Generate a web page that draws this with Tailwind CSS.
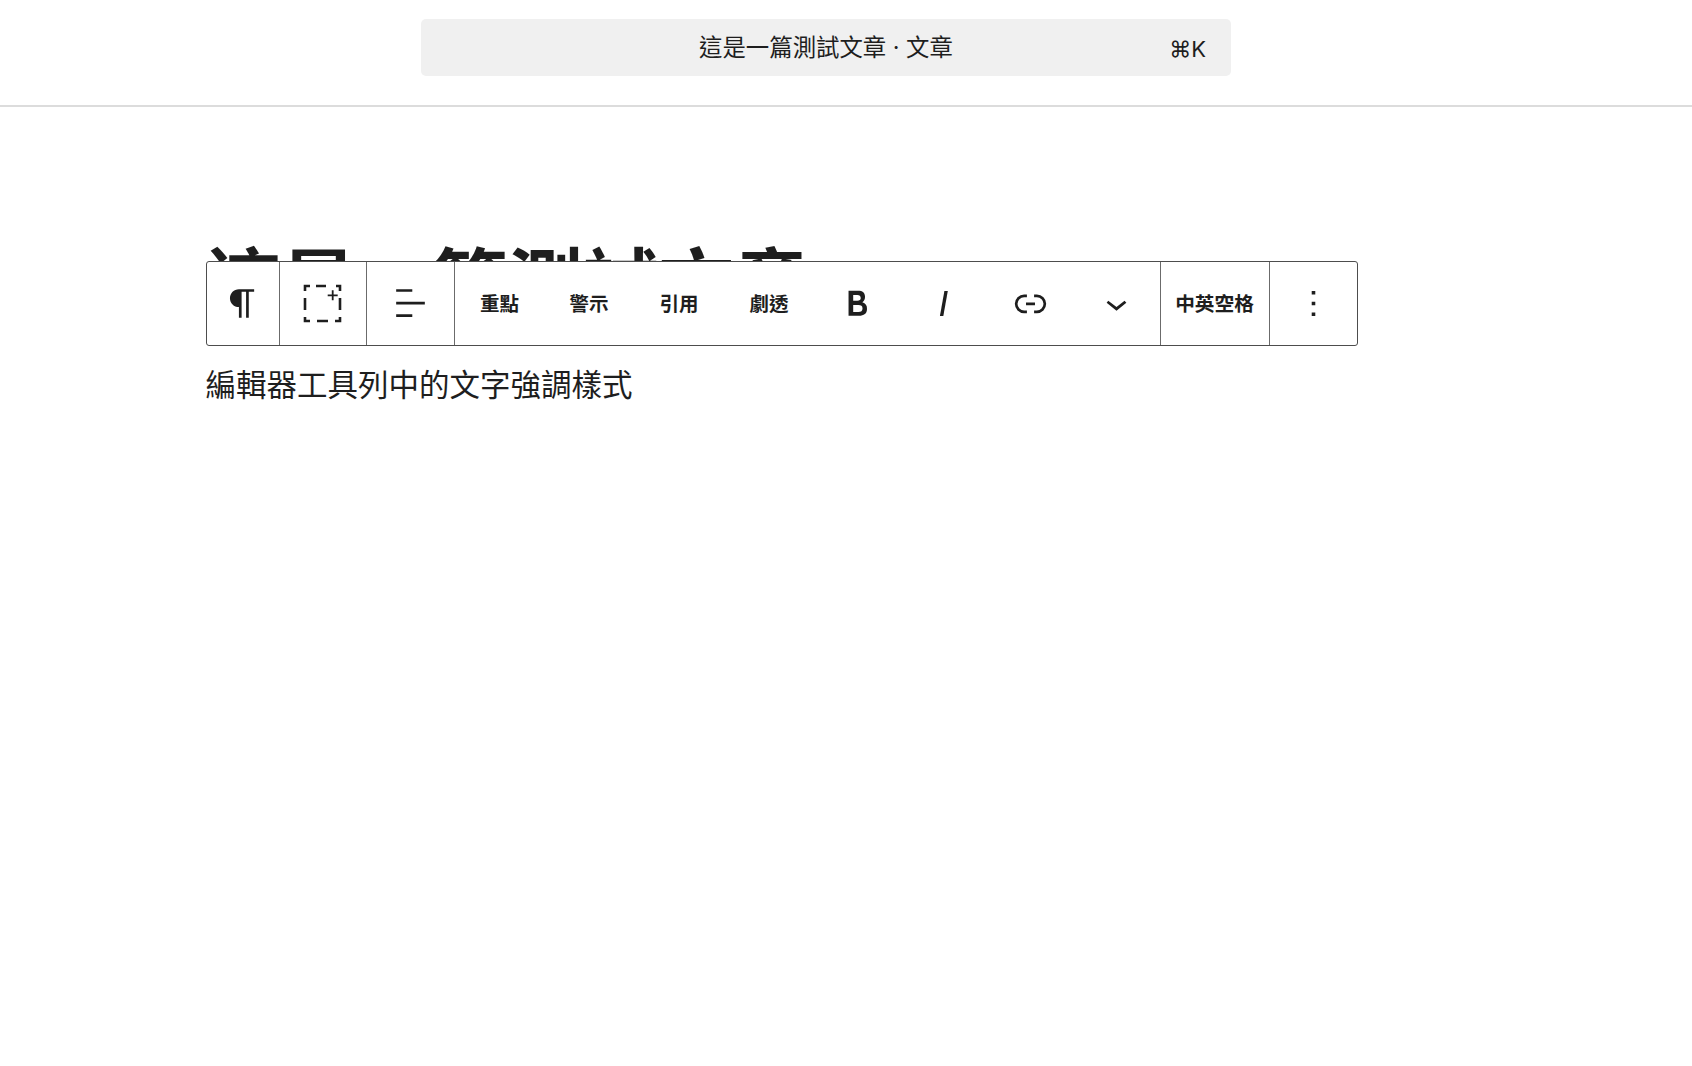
<!DOCTYPE html>
<html lang="zh-Hant">
<head>
<meta charset="utf-8">
<script src="https://cdn.jsdelivr.net/npm/@tailwindcss/browser@4"></script>
</head>
<body class="bg-white text-[#1e1e1e] font-['Inter','Noto_Sans_CJK_TC',sans-serif]">
<div class="relative h-[1066px] w-[1692px] overflow-hidden">
  <header class="flex h-[107px] items-start border-b-2 border-[#dcdcdc] pl-[421px] pt-[19px]">
    <div class="relative flex h-[57px] w-[810px] items-center justify-center rounded-[5px] bg-[#f0f0f0] pt-[1px] text-[23.4px]">
      <span>這是一篇測試文章 · 文章</span>
      <span class="absolute right-[25px] top-[17px] text-[22px] leading-[26px]">⌘K</span>
    </div>
  </header>
  <main class="pl-[205.5px]">
    <h1 class="mt-[127px] h-[100px] text-[75.5px] font-bold leading-[100px]">這是一篇測試文章</h1>
    <p class="mt-[-21px] pt-[50px] text-[30.5px] leading-[44px]">編輯器工具列中的文字強調樣式</p>
  </main>
  <div class="absolute left-[206px] top-[261px] flex h-[85px] w-[1152px] rounded-[3px] border border-[#4d4d4d] bg-white">
    <div class="flex w-[73px] items-center justify-center border-r border-[#6b6b6b] pr-[2px]">
      <svg class="h-[43px] w-[43px]" viewBox="0 0 24 24" fill="#1e1e1e"><path d="m9.99609 14v-.2251l.00391.0001v6.225h1.5v-14.5h2.5v14.5h1.5v-14.5h3v-1.5h-8.50391c-2.76142 0-5 2.23858-5 5 0 2.7614 2.23858 5 5 5z"/></svg>
    </div>
    <div class="flex w-[87px] items-center justify-center border-r border-[#6b6b6b]">
      <svg class="h-[40px] w-[40px]" viewBox="0 0 40 40" fill="none" stroke="#1e1e1e" stroke-width="2.6"><path d="M2 7V2h5M2 14v12M2 33v4h5M14 37h11M32 37h5v-4M37 26V14M33 2h4v5M13 2h10"/><path d="M29.7 6.3v10M24.7 11.3h10" stroke-width="1.8"/></svg>
    </div>
    <div class="flex w-[88px] items-center justify-center border-r border-[#6b6b6b]">
      <svg class="h-[43px] w-[43px]" viewBox="0 0 24 24" fill="#1e1e1e"><path d="M13 5.5H4V4h9v1.5Zm7 7H4V11h16v1.5Zm-7 7H4V18h9v1.5Z"/></svg>
    </div>
    <div class="flex w-[706px] items-center border-r border-[#6b6b6b] text-[19.5px] font-semibold">
      <div class="flex w-[89px] shrink-0 items-center justify-center pt-[2px]">重點</div>
      <div class="flex w-[90px] shrink-0 items-center justify-center pt-[2px]">警示</div>
      <div class="flex w-[90px] shrink-0 items-center justify-center pt-[2px]">引用</div>
      <div class="flex w-[90px] shrink-0 items-center justify-center pt-[2px]">劇透</div>
      <div class="flex w-[86px] shrink-0 items-center justify-center"><svg class="h-[43px] w-[43px]" viewBox="0 0 24 24" fill="#1e1e1e"><path d="M14.7 11.3c1-.6 1.5-1.6 1.5-3 0-2.3-1.3-3.4-4-3.4H7v14h5.8c1.4 0 2.5-.3 3.3-1 .8-.7 1.2-1.7 1.2-2.9.1-1.9-.8-3.1-2.6-3.7zm-5.1-4h2.3c.6 0 1.1.1 1.4.4.3.3.5.7.5 1.2s-.2 1-.5 1.2c-.3.3-.8.4-1.4.4H9.6V7.3zm4.6 9c-.4.3-1 .4-1.7.4H9.6v-3.9h2.9c.7 0 1.3.2 1.7.5.4.3.6.8.6 1.5s-.2 1.2-.6 1.5z"/></svg></div>
      <div class="flex w-[87px] shrink-0 items-center justify-center"><svg class="h-[43px] w-[43px]" viewBox="0 0 24 24" fill="#1e1e1e"><path d="M12.5 5L10 19h1.9l2.5-14z"/></svg></div>
      <div class="flex w-[86px] shrink-0 items-center justify-center"><svg class="h-[43px] w-[43px]" viewBox="0 0 24 24" fill="#1e1e1e"><path d="M10 17.389H8.444A5.194 5.194 0 1 1 8.444 7H10v1.5H8.444a3.694 3.694 0 0 0 0 7.389H10v1.5ZM14 7h1.556a5.194 5.194 0 0 1 0 10.39H14v-1.5h1.556a3.694 3.694 0 0 0 0-7.39H14V7Zm-4.5 6h5v-1.5h-5V13Z"/></svg></div>
      <div class="flex w-[86px] shrink-0 items-center justify-center"><svg class="h-[43px] w-[43px]" viewBox="0 0 24 24" fill="#1e1e1e"><path d="M17.5 11.6L12 16l-5.5-4.4.9-1.2L12 14l4.5-3.6 1 1.2z"/></svg></div>
    </div>
    <div class="flex w-[109px] items-center justify-center border-r border-[#6b6b6b] pt-[2px] pr-[1px] text-[19.7px] font-semibold">中英空格</div>
    <div class="flex flex-1 items-center justify-center">
      <svg class="h-[43px] w-[43px]" viewBox="0 0 24 24" fill="#1e1e1e"><path d="M13 19h-2v-2h2v2zm0-6h-2v-2h2v2zm0-6h-2V5h2v2z"/></svg>
    </div>
  </div>
</div>
</body>
</html>
